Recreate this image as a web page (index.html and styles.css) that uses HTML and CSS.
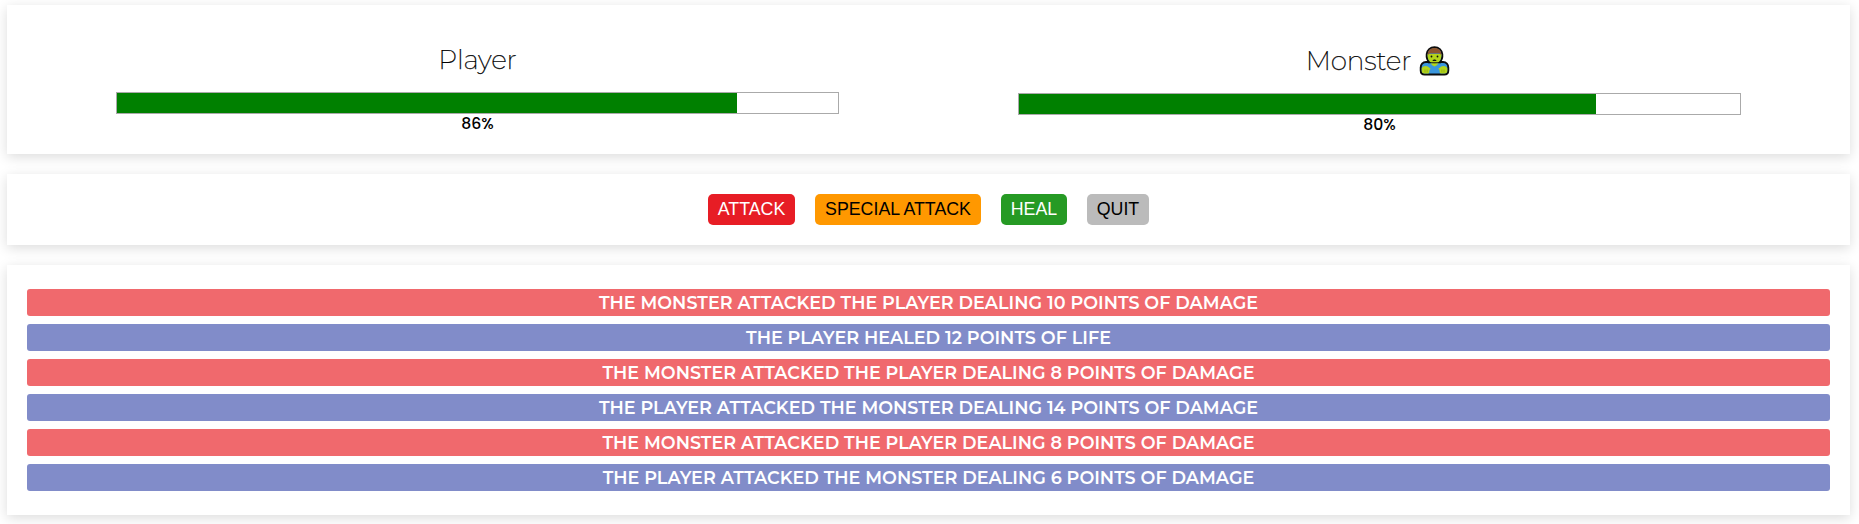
FILE: index.html
```
<!DOCTYPE html>
<html lang="en">
<head>
<meta charset="utf-8">
<title>Monster Slayer</title>
<link rel="stylesheet" href="styles.css">
</head>
<body>
<main class="app">
  <section class="panel scores">
    <div class="score">
      <h1 class="name"><span class="name-player">Player</span></h1>
      <div class="life-bar"><div class="life" style="width:86%"></div></div>
      <div class="percent">86%</div>
    </div>
    <div class="score score-monster">
      <h1 class="name"><span class="name-monster">Monster</span>
        <svg class="zombie" viewBox="0 0 30 30">
          <path d="M15 1.200C10.700 1.200 7.600 4 7.200 8.200c-.3 3.300.6 6 2.400 7.800H6.500C3.200 16 1.200 18.500 1.200 21.500v3c0 2.500 1.500 4 4 4h19.600c2.500 0 4-1.500 4-4v-3c0-3-2-5.500-5.300-5.500h-3.100c1.800-1.800 2.700-4.500 2.400-7.800C22.400 4 19.300 1.200 15 1.200z" fill="#3a96dd" stroke="#0c0c0c" stroke-width="1.900"/>
          <path d="M8.100 8h13.800c.3 4.500-1.500 8.200-4.900 9.200v.8l-2 2-2-2v-.8C9.600 16.200 7.800 12.500 8.100 8z" fill="#b4d51b"/>
          <path d="M8.500 16.800h13" stroke="#0c0c0c" stroke-width="1"/>
          <path d="M10.800 17.300l4.200.7 4.200-.7-2.200 2.200-2 1-2-1z" fill="#b4d51b"/>
          <path d="M8.100 9.200C8 4.500 10.800 2.100 15 2.100S22 4.500 21.900 9.200L20 7.600H10z" fill="#8e562e"/>
          <path d="M2.200 22.200c1-2 3.800-2.900 6.100-1.700l2.900 2.300-1.100 1.200-.5 3-1 .5H5c-2 0-2.900-1-2.800-3zM27.800 22.200c-1-2-3.800-2.900-6.100-1.700l-2.900 2.300 1.100 1.200.5 3 1 .5H25c2 0 2.900-1 2.800-3z" fill="#b4d51b"/>
          <path d="M5.500 23.500v3M7.600 23.500v3M22.400 23.500v3M24.500 23.500v3" stroke="#7d9b10" stroke-width=".6"/>
          <circle cx="12" cy="10.500" r=".9" fill="#0c0c0c"/><circle cx="18" cy="10.500" r=".9" fill="#0c0c0c"/>
          <path d="M12.900 15c.5-2.100 3.700-2.100 4.200 0z" fill="#0c0c0c"/>
        </svg></h1>
      <div class="life-bar"><div class="life" style="width:80%"></div></div>
      <div class="percent">80%</div>
    </div>
  </section>
  <section class="panel buttons">
    <button class="btn attack">ATTACK</button>
    <button class="btn special">SPECIAL ATTACK</button>
    <button class="btn heal">HEAL</button>
    <button class="btn quit">QUIT</button>
  </section>
  <section class="panel">
    <ul class="logs">
      <li class="log monster">THE MONSTER ATTACKED THE PLAYER DEALING 10 POINTS OF DAMAGE</li>
      <li class="log player">THE PLAYER HEALED 12 POINTS OF LIFE</li>
      <li class="log monster">THE MONSTER ATTACKED THE PLAYER DEALING 8 POINTS OF DAMAGE</li>
      <li class="log player">THE PLAYER ATTACKED THE MONSTER DEALING 14 POINTS OF DAMAGE</li>
      <li class="log monster">THE MONSTER ATTACKED THE PLAYER DEALING 8 POINTS OF DAMAGE</li>
      <li class="log player">THE PLAYER ATTACKED THE MONSTER DEALING 6 POINTS OF DAMAGE</li>
    </ul>
  </section>
</main>
</body>
</html>
```
FILE: styles.css
```
* { box-sizing: border-box; }
body { margin: 0; background: #fff; color: #000; font-family: Montserrat, Inter, sans-serif; overflow: hidden; }
.app { display: flex; flex-direction: column; gap: 20px; padding: 5px 9px 9px 7px; }
.panel { background: #fff; box-shadow: 0 3px 12px rgba(0, 0, 0, .14); }
.scores { display: flex; justify-content: center; gap: 179px; height: 149px; padding-top: 37px; }
.score { width: 723px; display: flex; flex-direction: column; align-items: center; }
.name { margin: 0; height: 50px; display: flex; align-items: center; gap: 8px; padding-bottom: 14px; font-size: 26.400px; line-height: 36px; font-weight: 200; letter-spacing: -.15px; }
.name-player, .name-monster { -webkit-text-stroke: .25px #000; }
.score-monster .name { height: 51px; padding: 0 3px 13px 0; letter-spacing: -.25px; }
.zombie { width: 31px; height: 30px; }
.life-bar { width: 723px; height: 22px; border: 1px solid #aaa; }
.life { height: 100%; background: green; }
.percent { font: 500 15.700px/20px Poppins, Montserrat, sans-serif; }
.buttons { display: flex; justify-content: center; gap: 20px; height: 71px; padding-top: 20px; }
.btn { height: 31px; padding: 0 0 1px; border: 0; border-radius: 5px; font: 17.800px/30px "Liberation Sans", Arial, sans-serif; color: #000; }
.attack { width: 87px; background: #e71d25; color: #fff; }
.special { width: 166px; background: #ff9800; }
.heal { width: 66px; background: #269a24; color: #fff; }
.quit { width: 62px; background: #bbb; }
.logs { list-style: none; height: 250px; margin: 0; padding: 24px 20px; display: flex; flex-direction: column; gap: 8px; }
.log { height: 27px; border-radius: 3px; color: #fff; font-size: 17.600px; line-height: 27px; font-weight: 600; text-align: center; letter-spacing: .015px; }
.log.monster { background: #f0696d; }
.log.player { background: #818cc9; }
```
